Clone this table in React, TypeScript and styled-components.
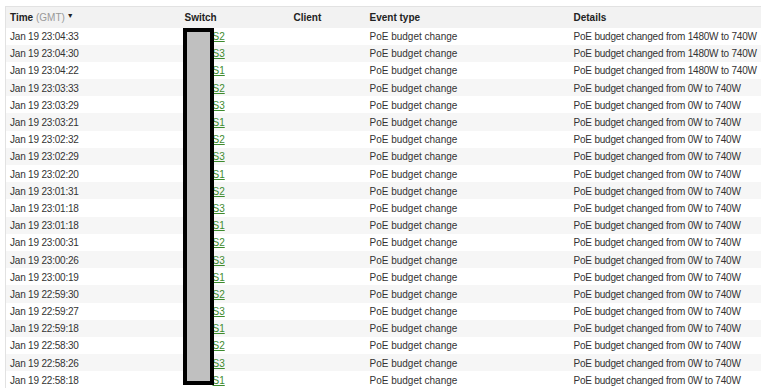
import React from "react";
import styled, { createGlobalStyle } from "styled-components";

const Global = createGlobalStyle`
  html, body { margin: 0; padding: 0; background: #fff; }
  body { font-family: "Liberation Sans", Arial, sans-serif; color: #333; }
`;

const Page = styled.div`
  padding: 6px 0 0 5px;
  position: relative;
  height: 388px;
  overflow: hidden;
  box-sizing: border-box;
`;

const Table = styled.table`
  border-collapse: collapse;
  width: 780px;
  table-layout: fixed;
  font-size: 10px;
  border-top: 1px solid #e2e2e2;
  border-left: 1px solid #e2e2e2;
`;

const HeadCell = styled.th<{ $w?: number }>`
  box-sizing: border-box;
  ${(p) => (p.$w ? `width: ${p.$w}px;` : "")}
  height: 21px;
  padding: 1px 0 0 4px;
  text-align: left;
  font-weight: bold;
  color: #222;
  background: #f2f2f2;
  white-space: nowrap;
  vertical-align: middle;
`;

const Muted = styled.span`
  font-weight: normal;
  color: #999;
`;

const SortArrow = styled.span`
  font-size: 7px;
  vertical-align: 3px;
  margin-left: 2px;
  color: #222;
`;

const Row = styled.tr<{ $alt: boolean }>`
  height: 17.2px;
  background: ${(p) => (p.$alt ? "#f6f6f6" : "#fff")};
`;

const Cell = styled.td<{ $tight?: boolean }>`
  padding: 1px 0 0 4px;
  white-space: nowrap;
  overflow: hidden;
  vertical-align: middle;
  letter-spacing: ${(p) => (p.$tight ? "-0.2px" : "normal")};
`;

const SwitchLink = styled.a`
  color: #3d8b2f;
  text-decoration: underline;
  margin-left: 28px;
`;

const Redaction = styled.div`
  position: absolute;
  left: 183px;
  top: 28px;
  width: 31px;
  height: 357px;
  box-sizing: border-box;
  border: 4px solid #000;
  background: #c0c0c0;
`;

type Ev = { t: string; s: string; d: string };

const rows: Ev[] = [
  { t: "Jan 19 23:04:33", s: "S2", d: "PoE budget changed from 1480W to 740W" },
  { t: "Jan 19 23:04:30", s: "S3", d: "PoE budget changed from 1480W to 740W" },
  { t: "Jan 19 23:04:22", s: "S1", d: "PoE budget changed from 1480W to 740W" },
  { t: "Jan 19 23:03:33", s: "S2", d: "PoE budget changed from 0W to 740W" },
  { t: "Jan 19 23:03:29", s: "S3", d: "PoE budget changed from 0W to 740W" },
  { t: "Jan 19 23:03:21", s: "S1", d: "PoE budget changed from 0W to 740W" },
  { t: "Jan 19 23:02:32", s: "S2", d: "PoE budget changed from 0W to 740W" },
  { t: "Jan 19 23:02:29", s: "S3", d: "PoE budget changed from 0W to 740W" },
  { t: "Jan 19 23:02:20", s: "S1", d: "PoE budget changed from 0W to 740W" },
  { t: "Jan 19 23:01:31", s: "S2", d: "PoE budget changed from 0W to 740W" },
  { t: "Jan 19 23:01:18", s: "S3", d: "PoE budget changed from 0W to 740W" },
  { t: "Jan 19 23:01:18", s: "S1", d: "PoE budget changed from 0W to 740W" },
  { t: "Jan 19 23:00:31", s: "S2", d: "PoE budget changed from 0W to 740W" },
  { t: "Jan 19 23:00:26", s: "S3", d: "PoE budget changed from 0W to 740W" },
  { t: "Jan 19 23:00:19", s: "S1", d: "PoE budget changed from 0W to 740W" },
  { t: "Jan 19 22:59:30", s: "S2", d: "PoE budget changed from 0W to 740W" },
  { t: "Jan 19 22:59:27", s: "S3", d: "PoE budget changed from 0W to 740W" },
  { t: "Jan 19 22:59:18", s: "S1", d: "PoE budget changed from 0W to 740W" },
  { t: "Jan 19 22:58:30", s: "S2", d: "PoE budget changed from 0W to 740W" },
  { t: "Jan 19 22:58:26", s: "S3", d: "PoE budget changed from 0W to 740W" },
  { t: "Jan 19 22:58:18", s: "S1", d: "PoE budget changed from 0W to 740W" },
];

export default function App() {
  return (
    <>
      <Global />
      <Page>
        <Table>
          <thead>
            <tr>
              <HeadCell $w={175}>
                Time <Muted>(GMT)</Muted>
                <SortArrow>▼</SortArrow>
              </HeadCell>
              <HeadCell $w={109}>Switch</HeadCell>
              <HeadCell $w={76}>Client</HeadCell>
              <HeadCell $w={204}>Event type</HeadCell>
              <HeadCell>Details</HeadCell>
            </tr>
          </thead>
          <tbody>
            {rows.map((r, i) => (
              <Row key={i} $alt={i % 2 === 1}>
                <Cell $tight>{r.t}</Cell>
                <Cell>
                  <SwitchLink href="#">{r.s}</SwitchLink>
                </Cell>
                <Cell></Cell>
                <Cell>PoE budget change</Cell>
                <Cell $tight>{r.d}</Cell>
              </Row>
            ))}
          </tbody>
        </Table>
        <Redaction />
      </Page>
    </>
  );
}
